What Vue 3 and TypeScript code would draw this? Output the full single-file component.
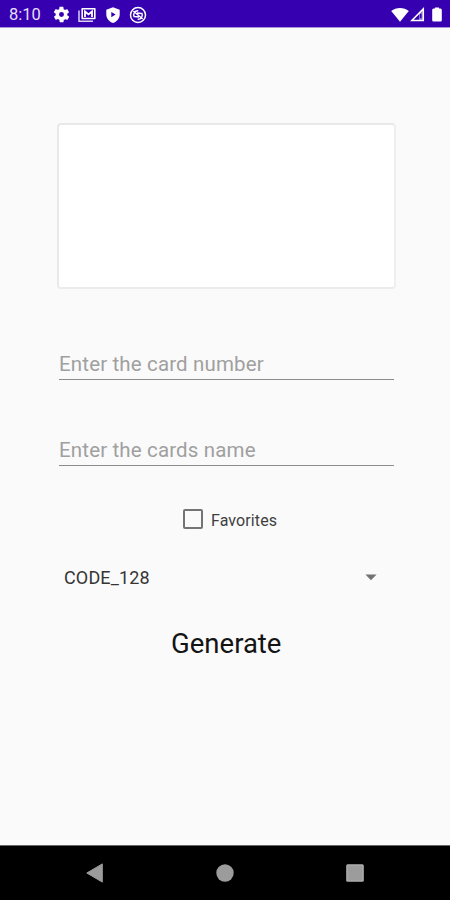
<script setup lang="ts">
import { ref } from 'vue'

interface Field {
  id: string
  hint: string
}

const fields: Field[] = [
  { id: 'number', hint: 'Enter the card number' },
  { id: 'name', hint: 'Enter the cards name' },
]
const favorite = ref<boolean>(false)
const format = ref<string>('CODE_128')
</script>

<template>
  <div class="screen">
    <header class="status">
      <span class="clock">8:10</span>
      <svg class="gear" width="17" height="17" viewBox="1 1 22 22">
        <path fill="#fff" fill-rule="evenodd" d="M19.4 13c.1-.3.1-.6.1-1s0-.7-.1-1l2.1-1.600c.2-.2.3-.4.1-.6l-2-3.500c-.1-.2-.4-.3-.6-.2l-2.500 1c-.5-.4-1.100-.7-1.700-1l-.4-2.600c0-.3-.2-.5-.5-.5h-4c-.2 0-.4.2-.5.4l-.4 2.700c-.6.2-1.100.6-1.700.9l-2.400-.9c-.3-.1-.5 0-.7.2l-2 3.500c-.1.2 0 .4.2.6L4.600 11c-.1.300-.1.700-.1 1s0 .7.100 1l-2.100 1.600c-.2.200-.3.400-.1.600l2 3.500c.1.200.4.300.6.200l2.500-1c.5.400 1.100.700 1.700 1l.4 2.600c0 .300.200.500.500.500h4c.2 0 .400-.2.500-.4l.4-2.700c.6-.2 1.100-.6 1.700-.9l2.400.9c.3.100.5 0 .7-.2l2-3.500c.1-.2 0-.4-.2-.6zM12 15.200a3.200 3.200 0 1 1 0-6.400 3.200 3.200 0 0 1 0 6.400z" />
      </svg>
      <svg class="mail" width="18" height="16" viewBox="0 0 18 16">
        <path d="M1 3.500V14.200H15" fill="none" stroke="#d9cff2" stroke-width="1.500" />
        <path d="M4.200 1.700H16.800V11.500H4.200Z" fill="none" stroke="#fff" stroke-width="1.600" stroke-linejoin="round" />
        <path d="M7 10V4.500L10.500 7.400L14 4.500V10" fill="none" stroke="#fff" stroke-width="1.800" />
      </svg>
      <svg class="shield" width="14" height="16" viewBox="0 0 14 16">
        <path fill="#fff" fill-rule="evenodd" d="M7 .2L13.700 2.700V7.500C13.700 11.400 10.800 14.800 7 15.900C3.200 14.800.3 11.400.3 7.500V2.700ZM5.300 5V10.200L9.600 7.600Z" />
      </svg>
      <svg class="sync" width="18" height="18" viewBox="0 0 18 18" fill="none" stroke="#fff">
        <circle cx="9" cy="9" r="7.500" stroke-width="1.500" />
        <path d="M5.300 11.200A4.300 4.300 0 0 1 9.300 4.700M12.700 6.800A4.300 4.300 0 0 1 8.700 13.300M4.300 5L13.700 13M8 7L12.500 7.500M5.500 10.500L10 11" stroke-width="1.400" />
      </svg>
      <div class="signals">
        <svg width="18" height="14" viewBox="0 0 18 14">
          <path fill="#fff" d="M9 13.700L.2 3C5-.9 13-.9 17.800 3Z" />
        </svg>
        <svg width="15" height="15" viewBox="0 0 15 15">
          <path d="M1.600 13.600H13.300V1.900Z" fill="none" stroke="#fff" stroke-width="1.500" />
          <path d="M9 6.200L13.500 1.700V13.600H9Z" fill="#fff" opacity=".45" />
          <path d="M10.700 7V11" stroke="#3600b1" stroke-width="1.500" />
        </svg>
        <svg class="battery" width="10" height="15" viewBox="0 0 10 15">
          <path fill="#fff" d="M3 .4H7V1.500H8.500Q9.800 1.700 9.800 2.900V13.300Q9.800 14.600 8.500 14.600H1.500Q.2 14.600.2 13.300V2.900Q.2 1.700 1.500 1.500H3Z" />
        </svg>
      </div>
    </header>

    <main class="content">
      <div class="preview"></div>
      <div v-for="field in fields" :key="field.id" class="field" :class="field.id">
        <span class="hint">{{ field.hint }}</span>
      </div>
      <div class="favorite" role="checkbox" :aria-checked="favorite" @click="favorite = !favorite">
        <span class="box"></span>
        <span class="caption">Favorites</span>
      </div>
      <div class="spinner">
        <span class="value">{{ format }}</span>
        <svg width="12" height="7" viewBox="0 0 12 7"><path d="M.4.500H11.600L6 6.300Z" fill="#737373" /></svg>
      </div>
      <button class="generate" type="button">Generate</button>
    </main>

    <nav class="navbar">
      <svg width="18" height="20" viewBox="0 0 18 20"><path d="M.8 10L16.300.9V19.100Z" fill="#9c9c9c" stroke="#9c9c9c" stroke-linejoin="round" /></svg>
      <svg width="18" height="18" viewBox="0 0 18 18"><circle cx="9" cy="9" r="8.700" fill="#9c9c9c" /></svg>
      <svg width="18" height="18" viewBox="0 0 18 18"><rect x=".2" y=".2" width="17.600" height="17.600" rx="1.500" fill="#b0b0b0" /><rect x="1.500" y="1.500" width="15" height="15" fill="#9c9c9c" /></svg>
    </nav>
  </div>
</template>

<style>
body {
  margin: 0;
}
</style>

<style scoped>
.screen {
  width: 450px;
  height: 900px;
  display: flex;
  flex-direction: column;
  background: #fafafa;
  font-family: Roboto, sans-serif;
  overflow: hidden;
}
svg {
  display: block;
  flex: none;
}
.status {
  height: 28px;
  flex: none;
  display: flex;
  align-items: center;
  box-sizing: border-box;
  padding: 2px 8px 0 9px;
  background: #3600b1;
  border-bottom: 1px solid #a895dc;
}
.clock {
  width: 44px;
  padding-top: 1px;
  color: #e6defa;
  font-size: 16.5px;
  line-height: 20px;
}
.mail {
  margin-left: 8px;
}
.shield {
  margin-left: 10px;
}
.sync {
  margin-left: 9px;
}
.signals {
  display: flex;
  align-items: center;
  gap: 1px;
  margin-left: auto;
}
.battery {
  margin-left: 6px;
}
.content {
  flex: 1;
  display: flex;
  flex-direction: column;
  padding: 95px 54.5px 0 57px;
}
.preview {
  height: 165.5px;
  box-sizing: border-box;
  flex: none;
  background: #fff;
  border: 2px solid #e9e9e9;
  border-right-color: #efefef;
  border-bottom-color: #ececec;
  border-radius: 4px;
}
.field {
  height: 30px;
  box-sizing: border-box;
  margin: 61.5px 2px 0;
  border-bottom: 1px solid #8c8c8c;
}
.field.name {
  margin-top: 56px;
}
.hint {
  display: block;
  color: #a0a0a0;
  font-size: 20.5px;
  letter-spacing: 0.15px;
  line-height: 28px;
  white-space: nowrap;
}
.favorite {
  display: flex;
  align-items: center;
  height: 24px;
  margin: 41px 0 0 126px;
}
.box {
  width: 20px;
  height: 20px;
  box-sizing: border-box;
  border: 2px solid #747474;
  border-radius: 2px;
}
.caption {
  margin-left: 8px;
  padding-top: 3px;
  color: #3f3f3f;
  font-size: 16px;
  letter-spacing: 0.1px;
  line-height: 20px;
}
.spinner {
  display: flex;
  align-items: center;
  justify-content: space-between;
  height: 24px;
  margin: 34px 19px 0 7px;
}
.value {
  padding-top: 2px;
  color: #353535;
  font-size: 18px;
  letter-spacing: 0.15px;
  line-height: 24px;
}
.generate {
  align-self: center;
  margin: 37px 0 0;
  padding: 0;
  border: 0;
  background: none;
  color: #141414;
  font-family: inherit;
  font-size: 27.5px;
  line-height: 36px;
}
.navbar {
  flex: none;
  height: 55px;
  box-sizing: border-box;
  display: flex;
  align-items: center;
  justify-content: space-between;
  padding: 0 86px;
  background: #000;
  border-top: 1px solid #666;
}
</style>
